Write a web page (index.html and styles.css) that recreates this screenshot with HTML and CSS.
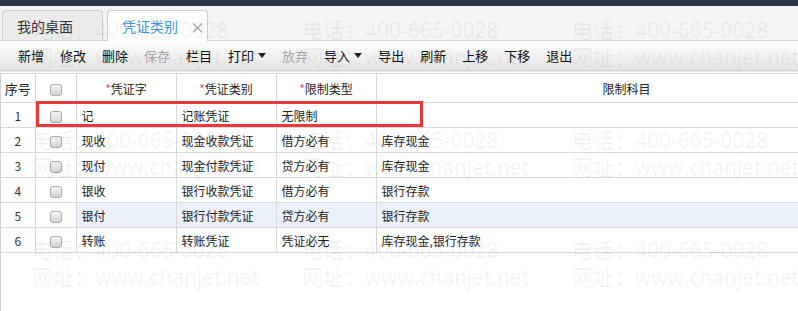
FILE: index.html
```html
<!DOCTYPE html>
<html lang="zh-CN">
<head>
    <meta charset="UTF-8">
    <meta name="viewport" content="width=device-width, initial-scale=1.0">
    <title>凭证类别</title>
    <link rel="stylesheet" href="styles.css">
</head>
<body>

    <div class="topbar"></div>

    <!-- Tabs -->
    <div class="tabbar">
        <div class="tab">我的桌面</div>
        <div class="tab active">凭证类别<span class="close">×</span></div>
    </div>

    <!-- Toolbar -->
    <div class="toolbar">
        <span class="tool">新增</span>
        <span class="tool">修改</span>
        <span class="tool">删除</span>
        <span class="tool disabled">保存</span>
        <span class="tool">栏目</span>
        <span class="tool">打印<i class="caret"></i></span>
        <span class="tool disabled">放弃</span>
        <span class="tool">导入<i class="caret"></i></span>
        <span class="tool">导出</span>
        <span class="tool">刷新</span>
        <span class="tool">上移</span>
        <span class="tool">下移</span>
        <span class="tool">退出</span>
    </div>

    <!-- Grid -->
    <div class="grid">
        <table>
            <colgroup>
                <col class="c-no">
                <col class="c-check">
                <col class="c-mid">
                <col class="c-mid">
                <col class="c-mid">
                <col class="c-wide">
            </colgroup>
            <thead>
                <tr>
                    <th class="no-head">序号</th>
                    <th><span class="check"></span></th>
                    <th><span class="req">*</span>凭证字</th>
                    <th><span class="req">*</span>凭证类别</th>
                    <th><span class="req">*</span>限制类型</th>
                    <th>限制科目</th>
                </tr>
            </thead>
            <tbody>
                <tr>
                    <td class="no">1</td>
                    <td class="ck"><span class="check"></span></td>
                    <td>记</td>
                    <td>记账凭证</td>
                    <td>无限制</td>
                    <td></td>
                </tr>
                <tr>
                    <td class="no">2</td>
                    <td class="ck"><span class="check"></span></td>
                    <td>现收</td>
                    <td>现金收款凭证</td>
                    <td>借方必有</td>
                    <td>库存现金</td>
                </tr>
                <tr>
                    <td class="no">3</td>
                    <td class="ck"><span class="check"></span></td>
                    <td>现付</td>
                    <td>现金付款凭证</td>
                    <td>贷方必有</td>
                    <td>库存现金</td>
                </tr>
                <tr>
                    <td class="no">4</td>
                    <td class="ck"><span class="check"></span></td>
                    <td>银收</td>
                    <td>银行收款凭证</td>
                    <td>借方必有</td>
                    <td>银行存款</td>
                </tr>
                <tr class="hover">
                    <td class="no">5</td>
                    <td class="ck"><span class="check"></span></td>
                    <td>银付</td>
                    <td>银行付款凭证</td>
                    <td>贷方必有</td>
                    <td>银行存款</td>
                </tr>
                <tr>
                    <td class="no">6</td>
                    <td class="ck"><span class="check"></span></td>
                    <td>转账</td>
                    <td>转账凭证</td>
                    <td>凭证必无</td>
                    <td>库存现金,银行存款</td>
                </tr>
            </tbody>
        </table>
    </div>

    <!-- Annotation box around row 1 -->
    <div class="mark"></div>

    <!-- Watermark -->
    <div class="watermark">
        <div class="wm">电话：400-665-0028<br>网址：www.chanjet.net</div>
        <div class="wm">电话：400-665-0028<br>网址：www.chanjet.net</div>
        <div class="wm">电话：400-665-0028<br>网址：www.chanjet.net</div>
        <div class="wm">电话：400-665-0028<br>网址：www.chanjet.net</div>
        <div class="wm">电话：400-665-0028<br>网址：www.chanjet.net</div>
        <div class="wm">电话：400-665-0028<br>网址：www.chanjet.net</div>
        <div class="wm">电话：400-665-0028<br>网址：www.chanjet.net</div>
        <div class="wm">电话：400-665-0028<br>网址：www.chanjet.net</div>
        <div class="wm">电话：400-665-0028<br>网址：www.chanjet.net</div>
    </div>

</body>
</html>
```

FILE: styles.css
```css
html, body {
    height: 100%;
}

body {
    margin: 0;
    position: relative;
    overflow: hidden;
    background-color: #fff;
    color: #222;
    font-family: "Noto Sans CJK SC", "Liberation Sans", sans-serif;
    font-size: 12px;
}

.topbar {
    height: 6px;
    background-color: #2b3542;
}

/* Tabs */
.tabbar {
    height: 35px;
    box-sizing: border-box;
    padding: 4px 0 0 2px;
    display: flex;
    align-items: flex-end;
    gap: 4px;
    background-color: #f4f4f4;
    border-bottom: 1px solid #d4d4d4;
}

.tab {
    width: 101px;
    height: 30px;
    box-sizing: border-box;
    padding-left: 14px;
    display: flex;
    align-items: center;
    font-size: 14px;
    color: #333;
    background-color: #ececec;
    border: 1px solid #cdcdcd;
    border-bottom: none;
    border-radius: 4px 4px 0 0;
}

.tab.active {
    height: 31px;
    margin-bottom: -1px;
    padding-left: 14px;
    color: #3d9ad6;
    background-color: #fff;
}

.close {
    margin-left: 12px;
    color: #9a9a9a;
    font-size: 15px;
}

/* Toolbar */
.toolbar {
    height: 29px;
    padding-left: 10px;
    display: flex;
    align-items: center;
    background: linear-gradient(#fefefe, #e4e4e4);
    border-bottom: 1px solid #cfcfcf;
    box-shadow: 0 1px 1px rgba(0, 0, 0, 0.08);
}

.tool {
    padding: 0 8px;
    font-size: 13px;
    color: #111;
    display: flex;
    align-items: center;
}

.tool.disabled {
    color: #a8a8a8;
}

.caret {
    margin-left: 4px;
    width: 0;
    height: 0;
    border-left: 4px solid transparent;
    border-right: 4px solid transparent;
    border-top: 5px solid #222;
}

/* Grid */
.grid {
    margin-top: 2px;
    height: 240px;
    border-left: 1px solid #cfcfcf;
    overflow: hidden;
}

table {
    width: 876px;
    table-layout: fixed;
    border-collapse: collapse;
}

.c-no { width: 34px; }
.c-check { width: 41px; }
.c-mid { width: 100px; }
.c-wide { width: 501px; }

th, td {
    border: 1px solid #d9d9d9;
    padding: 0 5px;
    white-space: nowrap;
    overflow: hidden;
    text-align: left;
    font-weight: normal;
}

th:first-child, td:first-child {
    border-left: none;
}

thead tr {
    height: 29px;
}

th {
    text-align: center;
    color: #222;
}

th.no-head {
    padding: 0;
    font-size: 13px;
}

.req {
    color: #e2507a;
}

tbody tr {
    height: 25px;
}

td.no {
    padding: 0;
    text-align: center;
    color: #333;
}

td.ck, th .check {
    text-align: center;
}

tr.hover td {
    background-color: #eaf1fa;
}

tr.hover td.no, tr.hover td.ck {
    background-color: #fff;
}

.check {
    display: inline-block;
    width: 12px;
    height: 12px;
    box-sizing: border-box;
    vertical-align: middle;
    border: 1px solid #a9a9a9;
    border-radius: 3px;
    background: linear-gradient(#f6f6f6, #d4d4d4);
}

/* Red annotation frame */
.mark {
    position: absolute;
    left: 36px;
    top: 101px;
    width: 387px;
    height: 26px;
    box-sizing: border-box;
    border: 3px solid #e23b3b;
    pointer-events: none;
}

/* Watermark */
.watermark {
    position: absolute;
    top: 0;
    left: 0;
    right: 0;
    bottom: 0;
    overflow: hidden;
    padding: 17px 0 0 32px;
    display: grid;
    grid-template-columns: repeat(3, 270px);
    grid-auto-rows: 110px;
    pointer-events: none;
}

.wm {
    font-family: "Open Sans", "Noto Sans CJK SC", sans-serif;
    font-size: 21px;
    line-height: 27px;
    color: rgba(0, 0, 0, 0.06);
    white-space: nowrap;
}
```
